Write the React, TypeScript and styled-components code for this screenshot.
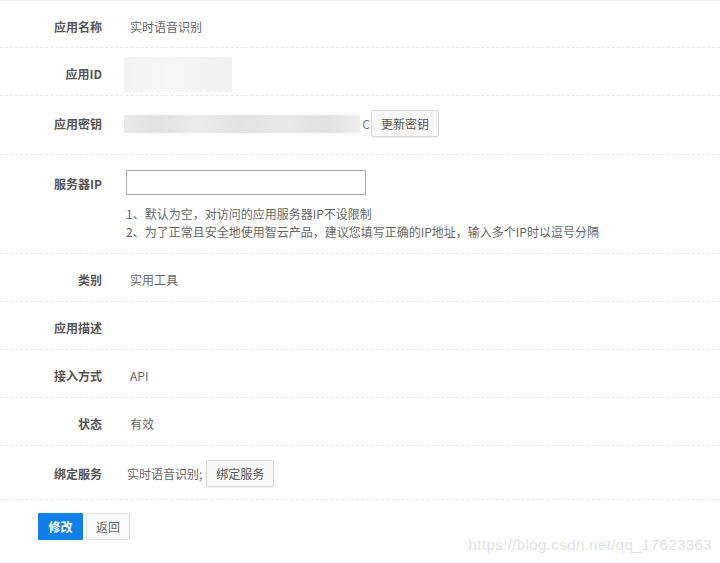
import styled, { createGlobalStyle } from "styled-components";

const GlobalStyle = createGlobalStyle`
  html, body {
    margin: 0;
    padding: 0;
    background: #fff;
  }
  body {
    font-family: "Noto Sans CJK SC", "Liberation Sans", sans-serif;
    font-size: 12px;
    color: #666;
  }
`;

const hints = [
  "1、默认为空，对访问的应用服务器IP不设限制",
  "2、为了正常且安全地使用智云产品，建议您填写正确的IP地址，输入多个IP时以逗号分隔",
];

const App = () => {
  return (
    <Page>
      <GlobalStyle />
      <Form>
        <Row $height={48}>
          <Label>应用名称</Label>
          <Value>实时语音识别</Value>
        </Row>
        <Row $height={48}>
          <Label>应用ID</Label>
          <Cell>
            <IdBlur />
          </Cell>
        </Row>
        <Row $height={59} $top={14}>
          <Label $tall>应用密钥</Label>
          <Cell>
            <KeyBlur />
            <KeyTail>C</KeyTail>
            <PlainButton>更新密钥</PlainButton>
          </Cell>
        </Row>
        <Row $height={99} $top={15}>
          <Label $tall>服务器IP</Label>
          <Stack>
            <IpInput type="text" />
            <HintList>
              {hints.map((h) => (
                <li key={h}>{h}</li>
              ))}
            </HintList>
          </Stack>
        </Row>
        <Row $height={48}>
          <Label>类别</Label>
          <Value>实用工具</Value>
        </Row>
        <Row $height={48}>
          <Label>应用描述</Label>
          <Value />
        </Row>
        <Row $height={48}>
          <Label>接入方式</Label>
          <Value>API</Value>
        </Row>
        <Row $height={48}>
          <Label>状态</Label>
          <Value>有效</Value>
        </Row>
        <Row $height={54} $top={14}>
          <Label $tall>绑定服务</Label>
          <Cell>
            <BindText>实时语音识别;</BindText>
            <PlainButton>绑定服务</PlainButton>
          </Cell>
        </Row>
      </Form>
      <Actions>
        <PrimaryButton>修改</PrimaryButton>
        <GhostButton>返回</GhostButton>
      </Actions>
      <Watermark>https://blog.csdn.net/qq_17623363</Watermark>
    </Page>
  );
};

const Page = styled.div`
  position: relative;
  width: 720px;
  height: 563px;
  overflow: hidden;
  border-top: 1px solid #ececec;
  box-sizing: border-box;
`;

const Form = styled.div`
  display: flex;
  flex-direction: column;
`;

const Row = styled.div<{ $height: number; $top?: number }>`
  display: grid;
  grid-template-columns: 102px 1fr;
  column-gap: 24px;
  align-items: ${(p) => (p.$top ? "start" : "center")};
  height: ${(p) => p.$height}px;
  padding-top: ${(p) => (p.$top ? p.$top : 5)}px;
  box-sizing: border-box;
  border-bottom: 1px dashed #e6e6e6;
  &:first-child {
    height: ${(p) => p.$height - 1}px;
  }
`;

const Label = styled.div<{ $tall?: boolean }>`
  text-align: right;
  font-weight: 600;
  color: #555;
  line-height: ${(p) => (p.$tall ? "27px" : "20px")};
`;

const Value = styled.div`
  padding-left: 4px;
  line-height: 20px;
  color: #666;
`;

const Cell = styled.div`
  display: flex;
  align-items: center;
  min-height: 27px;
`;

const IdBlur = styled.div`
  margin-left: -2px;
  width: 108px;
  height: 35px;
  background: linear-gradient(90deg, #f2f2f2 0%, #f6f6f6 40%, #f3f3f3 70%, #f0f0f0 100%);
`;

const KeyBlur = styled.div`
  margin-left: -2px;
  width: 236px;
  height: 18px;
  background: linear-gradient(
    90deg,
    #e9e9e9 0%,
    #e2e2e2 15%,
    #ebebeb 30%,
    #e4e4e4 50%,
    #e9e9e9 70%,
    #e1e1e1 85%,
    #ececec 100%
  );
`;

const KeyTail = styled.span`
  width: 10px;
  overflow: hidden;
  color: #777;
  direction: rtl;
`;

const PlainButton = styled.button`
  font-family: inherit;
  font-size: 12px;
  color: #555;
  height: 27px;
  padding: 0 9px;
  margin-left: 1px;
  background: #f8f8f8;
  border: 1px solid #d6d6d6;
  border-radius: 2px;
  box-shadow: 0 1px 1px rgba(0, 0, 0, 0.06);
  cursor: pointer;
`;

const Stack = styled.div`
  display: flex;
  flex-direction: column;
  gap: 10px;
`;

const IpInput = styled.input`
  width: 240px;
  height: 25px;
  box-sizing: border-box;
  border: 1px solid #aaa;
  border-radius: 0;
  outline: none;
  padding: 0 6px;
`;

const HintList = styled.ul`
  list-style: none;
  margin: 0;
  padding: 0;
  line-height: 18px;
  color: #666;
`;

const BindText = styled.span`
  padding-left: 1px;
  margin-right: 3px;
  color: #666;
`;

const Actions = styled.div`
  display: flex;
  gap: 3px;
  padding: 13px 0 0 38px;
`;

const PrimaryButton = styled.button`
  font-family: inherit;
  font-size: 12px;
  font-weight: 600;
  color: #fff;
  height: 27px;
  width: 45px;
  background: #0f80e9;
  border: none;
  border-radius: 1px;
  cursor: pointer;
`;

const GhostButton = styled.button`
  font-family: inherit;
  font-size: 12px;
  color: #666;
  height: 27px;
  width: 44px;
  background: #fafafa;
  border: 1px solid #dcdcdc;
  border-radius: 1px;
  cursor: pointer;
`;

const Watermark = styled.div`
  position: absolute;
  right: 8px;
  bottom: 10px;
  font-family: "Liberation Sans", Arial, sans-serif;
  font-size: 15px;
  color: #e2e2e2;
  text-shadow: 0 0 1px #fff;
  letter-spacing: 0.4px;
`;

export default App;
